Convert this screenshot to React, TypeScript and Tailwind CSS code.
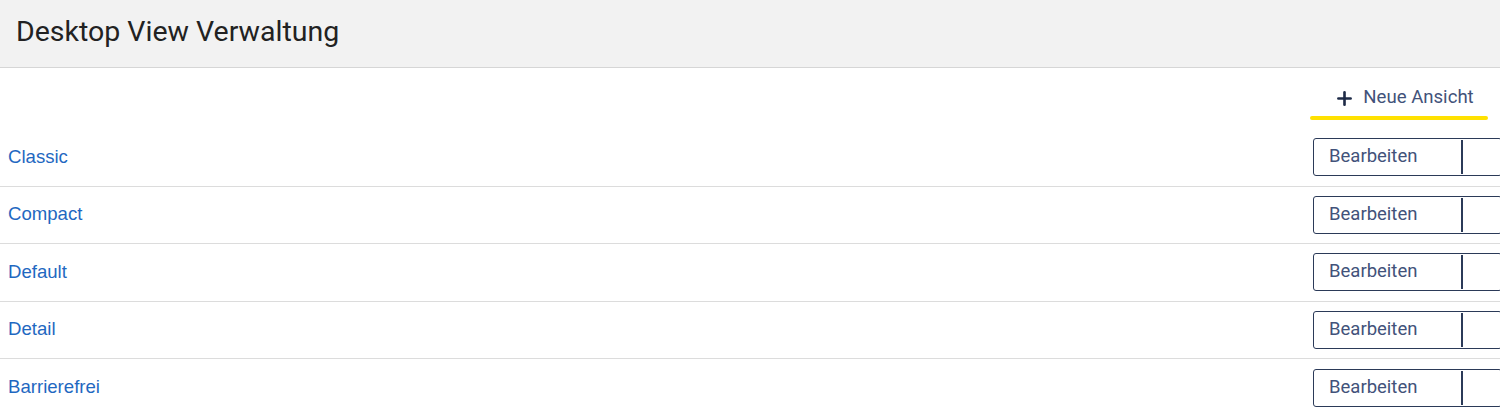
import { Plus } from "lucide-react";

const views = ["Classic", "Compact", "Default", "Detail", "Barrierefrei"];

function ViewRow({ name }: { name: string }) {
  return (
    <div className="flex items-center justify-between h-[57.5px] border-b border-[#dcdcdc] last:border-b-0 pl-2">
      <a
        href="#"
        className="text-[18.6px] text-[#1f68c1] font-['Liberation_Sans',Arial,sans-serif] leading-none"
      >
        {name}
      </a>
      <div className="flex h-[38px] -mr-[2px] border border-[#2b3a58] rounded-[3px] bg-white">
        <button className="w-[147px] pl-[15px] text-left text-[18.5px] text-[#42527a] font-['Roboto',sans-serif]">
          Bearbeiten
        </button>
        <div className="w-[40px] my-[1px] border-l-2 border-[#2b3a58]" />
      </div>
    </div>
  );
}

export default function App() {
  return (
    <div className="w-[1500px] h-[413px] overflow-hidden bg-white font-['Roboto',sans-serif]">
      <div className="h-[68px] flex items-center px-4 pb-[2px] bg-[#f2f2f2] border-b border-[#d6d6d6]">
        <h1 className="text-[28.5px] text-[#222222]">Desktop View Verwaltung</h1>
      </div>

      <div className="h-[61px] flex justify-end pr-3 pt-[16px]">
        <button className="flex flex-col items-center w-[178px]">
          <span className="flex items-center gap-[8px] h-[28px] pl-[10px] text-[18.6px] text-[#42527a]">
            <Plus size={21} strokeWidth={3} className="text-[#1e2b47]" />
            Neue Ansicht
          </span>
          <span className="mt-[4px] w-full h-[4px] rounded-full bg-[#ffe100]" />
        </button>
      </div>

      <div className="flex flex-col">
        {views.map((v) => (
          <ViewRow key={v} name={v} />
        ))}
      </div>
    </div>
  );
}
